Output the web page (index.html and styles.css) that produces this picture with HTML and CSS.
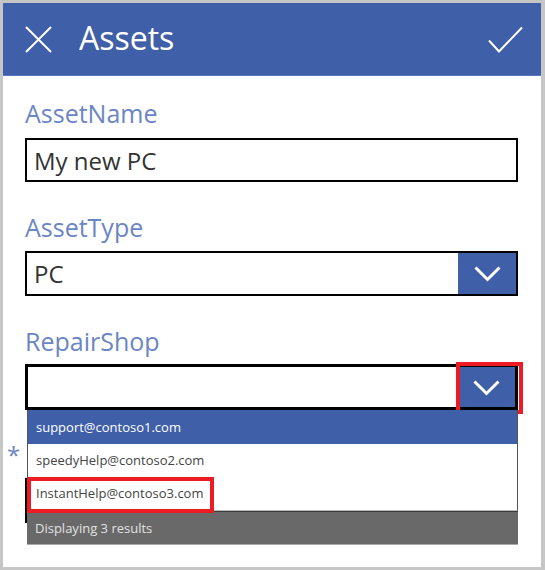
FILE: index.html
```html
<!DOCTYPE html>
<html>
<head>
<meta charset="utf-8">
<link rel="stylesheet" href="styles.css">
</head>
<body>
<div class="app">
  <header class="header">
    <svg class="icon-x" width="27" height="27" viewBox="0 0 27 27"><path d="M1 1 L26 26 M26 1 L1 26" stroke="#fff" stroke-width="2" fill="none"/></svg>
    <h1 class="title">Assets</h1>
    <svg class="icon-check" width="35" height="27" viewBox="0 0 35 27"><path d="M1 14.5 L11 25.5 L34 1.5" stroke="#fff" stroke-width="2" fill="none"/></svg>
  </header>
  <main class="form">
    <div class="field">
      <div class="label">AssetName</div>
      <div class="input"><span class="value">My new PC</span></div>
    </div>
    <div class="field">
      <div class="label">AssetType</div>
      <div class="input dropdown"><span class="value">PC</span>
        <span class="dd-btn"><svg width="27" height="16" viewBox="0 0 27 16"><path d="M1.5 1.5 L13.5 13.5 L25.5 1.5" stroke="#fff" stroke-width="3" fill="none"/></svg></span>
      </div>
    </div>
    <div class="field">
      <div class="label">RepairShop</div>
      <div class="input dropdown focused"><span class="value"></span>
        <span class="dd-btn"><svg width="27" height="16" viewBox="0 0 27 16"><path d="M1.5 1.5 L13.5 13.5 L25.5 1.5" stroke="#fff" stroke-width="3" fill="none"/></svg></span>
        <span class="highlight hl-btn"></span>
        <div class="list">
          <div class="item selected">support@contoso1.com</div>
          <div class="item">speedyHelp@contoso2.com</div>
          <div class="item">InstantHelp@contoso3.com<span class="highlight hl-item"></span></div>
          <div class="results">Displaying 3 results</div>
        </div>
      </div>
    </div>
    <div class="field">
      <div class="label"><span class="req">*</span></div>
      <div class="input"></div>
    </div>
  </main>
</div>
</body>
</html>
```

FILE: styles.css
```css
html, body {
  margin: 0;
  padding: 0;
}
body {
  background: #c6c6c6;
  font-family: "Open Sans", "DejaVu Sans", sans-serif;
}
.app {
  margin: 3px 4px 3px 3px;
  height: 564px;
  background: #ffffff;
  overflow: hidden;
}
.header {
  height: 72px;
  background: #3f5fa9;
  border-bottom: 1px solid #5a77b9;
  display: flex;
  align-items: center;
  padding: 0 18px 0 22px;
}
.icon-x {
  display: block;
  flex: none;
}
.title {
  margin: 0 0 0 27px;
  font-size: 32px;
  font-weight: 400;
  color: #ffffff;
  line-height: 40px;
  flex: 1;
  position: relative;
  top: -1px;
}
.icon-check {
  display: block;
  flex: none;
}
.form {
  padding: 21px 23px 0 22px;
}
.field {
  margin-bottom: 29px;
}
.label {
  font-size: 25px;
  line-height: 32px;
  height: 32px;
  color: #6a86c4;
  margin-bottom: 9px;
  position: relative;
}
.input {
  box-sizing: border-box;
  height: 44px;
  border: 2px solid #000;
  display: flex;
  align-items: center;
  position: relative;
  background: #fff;
}
.value {
  flex: 1;
  padding-left: 7px;
  font-size: 24px;
  color: #333;
}
.dropdown {
  height: 45px;
}
.field:nth-child(2) .label {
  margin-bottom: 8px;
}
.field:nth-child(3) .label,
.field:nth-child(4) .label {
  margin-bottom: 7px;
}
.dropdown.focused {
  height: 46px;
  border-width: 3px;
}
.field:nth-child(4) .input {
  height: 45px;
}
.dd-btn {
  align-self: stretch;
  width: 58px;
  background: #3f5fa9;
  display: flex;
  align-items: center;
  justify-content: center;
}
.dd-btn svg {
  display: block;
  margin-top: 1px;
}
.highlight {
  position: absolute;
  box-sizing: border-box;
  border: 4px solid #ed1c24;
}
.hl-btn {
  top: -5px;
  right: -8px;
  width: 67px;
  height: 52px;
}
.list {
  position: absolute;
  top: 43px;
  left: -1px;
  right: -3px;
  z-index: 2;
  font-size: 13px;
  color: #444;
}
.item {
  position: relative;
  height: 33px;
  line-height: 33px;
  padding-left: 8px;
  background: #fff;
  border-left: 1px solid #555;
  border-right: 1px solid #555;
}
.item.selected {
  height: 34px;
  line-height: 34px;
  background: #3f5fa9;
  color: #fff;
}
.item:nth-child(3) {
  border-bottom: 1px solid #bbb;
}
.hl-item {
  top: 0;
  left: -1px;
  width: 187px;
  height: 36px;
}
.results {
  height: 34px;
  line-height: 33px;
  padding-left: 8px;
  background: #696969;
  color: #e2e2e2;
  border-top: 1px solid #3a3a3a;
  box-sizing: border-box;
  border-bottom: 1px solid #aaa;
}
.req {
  position: absolute;
  left: -18px;
  top: 0;
  font-size: 24px;
  color: #6a86c4;
}
```
